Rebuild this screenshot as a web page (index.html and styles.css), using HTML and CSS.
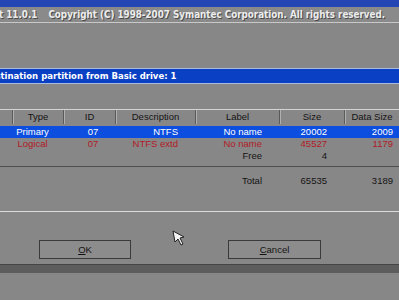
FILE: index.html
```html
<!DOCTYPE html>
<html lang="en">

<head>
    <meta charset="UTF-8">
    <meta name="viewport" content="width=device-width, initial-scale=1.0">
    <title>Ghost</title>
    <link rel="stylesheet" href="styles.css">
</head>

<body>
    <div class="screen">
        <div class="topbar"></div>
        <div class="title">
            <span class="ver">t 11.0.1</span>
            <span class="copy">Copyright (C) 1998-2007 Symantec Corporation. All rights reserved.</span>
        </div>

        <div class="prompt">Select destination partition from Basic drive: 1</div>

        <div class="grid head">
            <div></div>
            <div>Type</div>
            <div>ID</div>
            <div>Description</div>
            <div>Label</div>
            <div>Size</div>
            <div>Data Size</div>
        </div>

        <div class="rows">
            <div class="grid row sel">
                <div></div>
                <div class="type">Primary</div>
                <div class="id">07</div>
                <div class="r">NTFS</div>
                <div class="r">No name</div>
                <div class="r">20002</div>
                <div class="r">2009</div>
            </div>
            <div class="grid row red">
                <div></div>
                <div class="type">Logical</div>
                <div class="id">07</div>
                <div class="r">NTFS extd</div>
                <div class="r">No name</div>
                <div class="r">45527</div>
                <div class="r">1179</div>
            </div>
            <div class="grid row">
                <div></div>
                <div></div>
                <div></div>
                <div></div>
                <div class="r">Free</div>
                <div class="r">4</div>
                <div></div>
            </div>
        </div>

        <div class="grid row total">
            <div></div>
            <div></div>
            <div></div>
            <div></div>
            <div class="r">Total</div>
            <div class="r">65535</div>
            <div class="r">3189</div>
        </div>

        <div class="buttons">
            <div class="btn"><u>O</u>K</div>
            <div class="btn"><u>C</u>ancel</div>
        </div>

        <div class="band"></div>

        <svg class="cursor" width="14" height="16" viewBox="0 0 14 16">
            <polygon points="1,1 12,7 8,8 11,14 9,15 6,9 3,12" fill="#f4f4f4" stroke="#202020" stroke-width="1" />
        </svg>
    </div>
</body>

</html>
```

FILE: styles.css
```css
body {
    margin: 0;
    background-color: #888787;
    font-family: "DejaVu Sans", sans-serif;
}

.screen {
    position: relative;
    width: 399px;
    height: 300px;
    overflow: hidden;
}

.topbar {
    height: 7px;
    background-color: #2446b4;
}

.title {
    height: 15px;
    line-height: 15px;
    background-color: #8b8a8a;
    border-bottom: 1px solid #c8c8c8;
    color: #ececec;
    font-family: "DejaVu Sans Condensed", "DejaVu Sans", sans-serif;
    font-weight: bold;
    font-size: 9.75px;
    white-space: nowrap;
    text-shadow: 1px 1px 0 #4a4a4a;
}

.title .ver {
    margin-left: -1px;
}

.title .copy {
    margin-left: 8px;
}

.prompt {
    margin-top: 45px;
    height: 14px;
    line-height: 14px;
    background-color: #0a40c4;
    border-top: 1px solid #a8bce0;
    border-bottom: 1px solid #a8bce0;
    color: #ffffff;
    font-weight: bold;
    font-size: 8.5px;
    white-space: nowrap;
    text-indent: -49px;
}

.grid {
    display: grid;
    grid-template-columns: 12px 51px 52px 80px 84px 65px 1fr;
    font-family: "Liberation Sans", sans-serif;
    font-size: 9.5px;
    white-space: nowrap;
}

.head {
    margin-top: 25px;
    border-top: 1px solid #d4d4d4;
    height: 14px;
    line-height: 14px;
    color: #141414;
}

.head>div {
    text-align: center;
    border-left: 1px solid #5a5a5a;
    box-shadow: inset 1px 0 0 #b0b0b0;
}

.head>div:first-child {
    border-left: none;
    box-shadow: none;
}

.rows {
    margin-top: 2px;
    padding-bottom: 4px;
    border-bottom: 1px solid #4e4e4e;
}

.row {
    height: 12px;
    line-height: 12px;
    color: #141414;
}

.row .type {
    text-align: center;
    padding-right: 10px;
}

.row .id {
    text-align: center;
    padding-left: 8px;
}

.row .r {
    text-align: right;
    padding-right: 17px;
}

.row>div:last-child.r {
    padding-right: 6px;
}

.sel {
    background-color: #0c4ee0;
    color: #ffffff;
}

.red {
    color: #b01a26;
}

.total {
    margin-top: 8px;
    padding-bottom: 24px;
    border-bottom: 1px solid #dcdcdc;
}

.buttons {
    display: flex;
    gap: 97px;
    margin-top: 28px;
    padding-left: 39px;
}

.btn {
    width: 90px;
    height: 17px;
    line-height: 17px;
    border: 1px solid #3a3a3a;
    background-color: #8d8c8c;
    text-align: center;
    font-family: "Liberation Sans", sans-serif;
    font-size: 9.5px;
    color: #141414;
}

.btn+.btn {
    width: 91px;
}

.band {
    margin-top: 5px;
    height: 8px;
    background-color: #5e5d5d;
    border-top: 1px solid #464646;
}

.cursor {
    position: absolute;
    left: 172px;
    top: 230px;
}
```
